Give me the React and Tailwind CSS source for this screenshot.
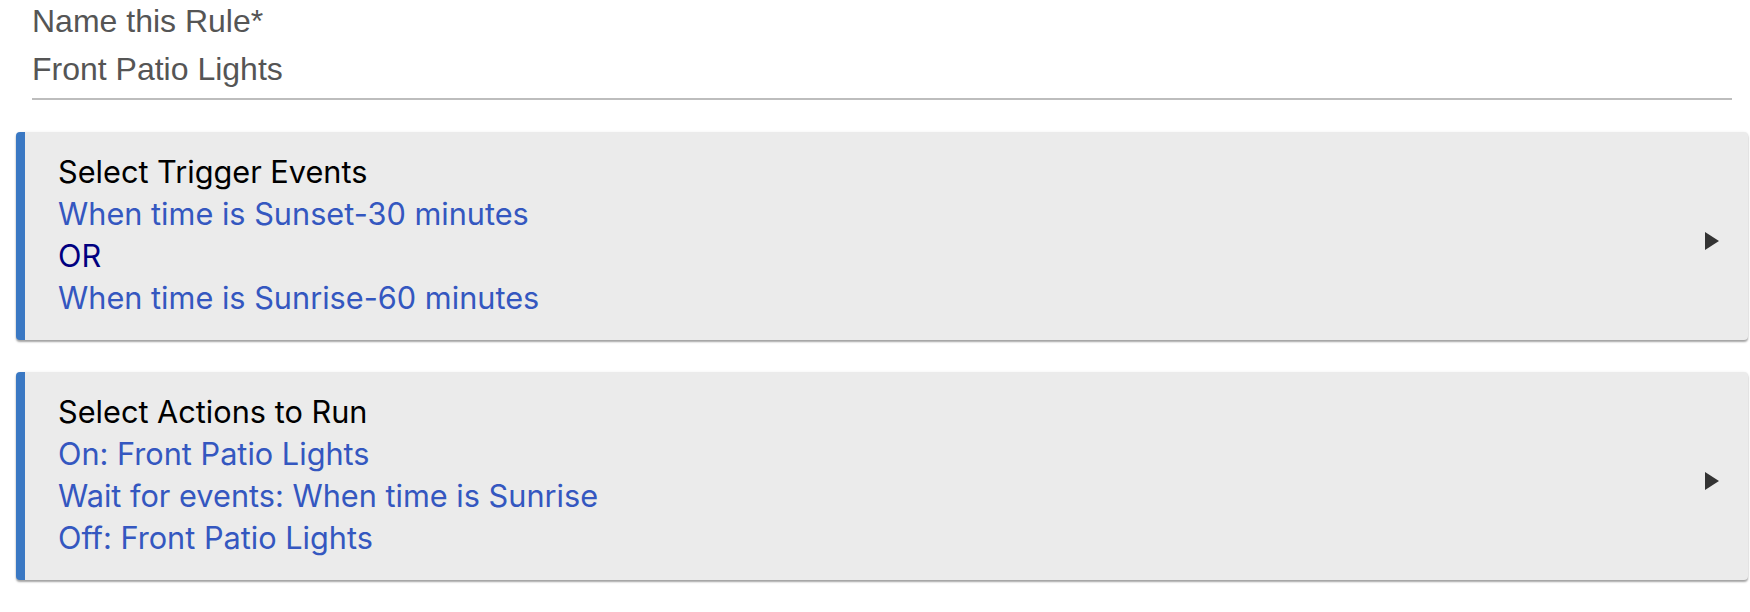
import React from "react";

function Arrow() {
  return (
    <svg width="14" height="18" viewBox="0 0 14 18" className="shrink-0">
      <path d="M0 0 L14 9 L0 18 Z" fill="#333333" />
    </svg>
  );
}

function Card({ title, lines }) {
  return (
    <div className="ml-4 mr-[2px] flex items-center rounded-[4px] border-l-[9px] border-[#3a78c3] bg-[#ebebeb] pt-[19px] pb-[21px] pl-[33px] pr-[29px] shadow-[0_2px_2px_rgba(0,0,0,0.35),0_0_3px_rgba(0,0,0,0.06)]">
      <div className="flex-1 font-['Inter',sans-serif] text-[30.7px] leading-[42px]">
        <div className="text-black">{title}</div>
        {lines.map((l, i) => (
          <div key={i} className={l.or ? "text-[#000080]" : "text-[#3457c0]"}>
            {l.text}
          </div>
        ))}
      </div>
      <div className="mt-3">
        <Arrow />
      </div>
    </div>
  );
}

export default function App() {
  return (
    <div className="w-[1750px] h-[612px] bg-white overflow-hidden">
      <div className="pl-8 pr-[18px] pt-[4px] font-['Liberation_Sans',Arial,sans-serif] text-[32px] leading-[35px] text-[#555555]">
        <div>Name this Rule*</div>
        <div className="mt-[13px] border-b-2 border-[#bdbdbd] pb-[11px]">Front Patio Lights</div>
      </div>
      <div className="mt-8 flex flex-col gap-8">
        <Card
          title="Select Trigger Events"
          lines={[
            { text: "When time is Sunset-30 minutes" },
            { text: "OR", or: true },
            { text: "When time is Sunrise-60 minutes" },
          ]}
        />
        <Card
          title="Select Actions to Run"
          lines={[
            { text: "On: Front Patio Lights" },
            { text: "Wait for events: When time is Sunrise" },
            { text: "Off: Front Patio Lights" },
          ]}
        />
      </div>
    </div>
  );
}
